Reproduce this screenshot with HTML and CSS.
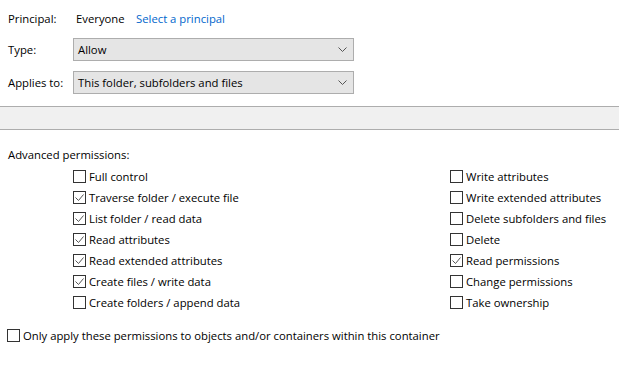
FILE: index.html
```html
<!DOCTYPE html>
<html lang="en">
<head>
  <meta charset="UTF-8">
  <title>Permission Entry</title>
  <link rel="stylesheet" href="styles.css">
</head>
<body>
  <div class="page">
    <div class="principal">
      <span class="label">Principal:</span>
      <span class="who">Everyone</span>
      <a class="link" href="#">Select a principal</a>
    </div>
    <div class="field">
      <span class="label">Type:</span>
      <div class="combo"><span>Allow</span><svg class="chev" width="9" height="5" viewBox="0 0 9 5"><path d="M0.5 0.5 L4.5 4.5 L8.5 0.5" fill="none" stroke="#555" stroke-width="1"/></svg></div>
    </div>
    <div class="field">
      <span class="label">Applies to:</span>
      <div class="combo"><span>This folder, subfolders and files</span><svg class="chev" width="9" height="5" viewBox="0 0 9 5"><path d="M0.5 0.5 L4.5 4.5 L8.5 0.5" fill="none" stroke="#555" stroke-width="1"/></svg></div>
    </div>
  </div>

  <div class="band"></div>

  <div class="page">
    <div class="heading">Advanced permissions:</div>
    <div class="perms">
      <div class="col">
        <label class="check"><span class="box"></span>Full control</label>
        <label class="check"><span class="box on"><svg width="11" height="11" viewBox="0 0 11 11"><path d="M1.5 5.5 L4.5 8.5 L9.5 2.5" fill="none" stroke="#555" stroke-width="1"/></svg></span>Traverse folder / execute file</label>
        <label class="check"><span class="box on"><svg width="11" height="11" viewBox="0 0 11 11"><path d="M1.5 5.5 L4.5 8.5 L9.5 2.5" fill="none" stroke="#555" stroke-width="1"/></svg></span>List folder / read data</label>
        <label class="check"><span class="box on"><svg width="11" height="11" viewBox="0 0 11 11"><path d="M1.5 5.5 L4.5 8.5 L9.5 2.5" fill="none" stroke="#555" stroke-width="1"/></svg></span>Read attributes</label>
        <label class="check"><span class="box on"><svg width="11" height="11" viewBox="0 0 11 11"><path d="M1.5 5.5 L4.5 8.5 L9.5 2.5" fill="none" stroke="#555" stroke-width="1"/></svg></span>Read extended attributes</label>
        <label class="check"><span class="box on"><svg width="11" height="11" viewBox="0 0 11 11"><path d="M1.5 5.5 L4.5 8.5 L9.5 2.5" fill="none" stroke="#555" stroke-width="1"/></svg></span>Create files / write data</label>
        <label class="check"><span class="box"></span>Create folders / append data</label>
      </div>
      <div class="col">
        <label class="check"><span class="box"></span>Write attributes</label>
        <label class="check"><span class="box"></span>Write extended attributes</label>
        <label class="check"><span class="box"></span>Delete subfolders and files</label>
        <label class="check"><span class="box"></span>Delete</label>
        <label class="check"><span class="box on"><svg width="11" height="11" viewBox="0 0 11 11"><path d="M1.5 5.5 L4.5 8.5 L9.5 2.5" fill="none" stroke="#555" stroke-width="1"/></svg></span>Read permissions</label>
        <label class="check"><span class="box"></span>Change permissions</label>
        <label class="check"><span class="box"></span>Take ownership</label>
      </div>
    </div>
  </div>

  <div class="bottom">
    <label class="check"><span class="box"></span>Only apply these permissions to objects and/or containers within this container</label>
  </div>
</body>
</html>
```

FILE: styles.css
```css
body {
  margin: 0;
  background: #ffffff;
  color: #000000;
  font-family: "Open Sans", "Noto Sans", sans-serif;
  font-size: 11.3px;
  line-height: 16px;
}
.page {
  padding: 0 8px;
}
.label {
  display: inline-block;
  width: 65px;
}
.principal {
  margin-top: 11px;
  display: flex;
}
.who {
  width: 60px;
  margin-left: 3px;
}
.link {
  color: #0066cc;
  text-decoration: none;
}
.field {
  display: flex;
  align-items: center;
  margin-top: 10px;
}
.principal + .field {
  margin-top: 11px;
}
.combo {
  height: 21px;
  background: #e5e5e5;
  border: 1px solid #adadad;
  display: flex;
  align-items: center;
  justify-content: space-between;
  padding: 0 6px 0 4px;
  width: 269px;
}
.chev {
  display: block;
}
.band {
  margin-top: 12px;
  height: 22px;
  background: #f0f0f0;
  border-top: 1px solid #adadad;
  border-bottom: 1px solid #adadad;
}
.heading {
  margin-top: 17px;
}
.perms {
  display: grid;
  grid-template-columns: 377px 1fr;
  padding-left: 65px;
  margin-top: 3px;
}
.check {
  display: flex;
  align-items: center;
  height: 21px;
  white-space: nowrap;
}
.box {
  width: 11px;
  height: 11px;
  border: 1px solid #333333;
  background: #ffffff;
  margin-right: 3px;
  flex: none;
  display: flex;
}
.box svg {
  display: block;
}
.bottom {
  padding-left: 7px;
  margin-top: 12px;
}
```
